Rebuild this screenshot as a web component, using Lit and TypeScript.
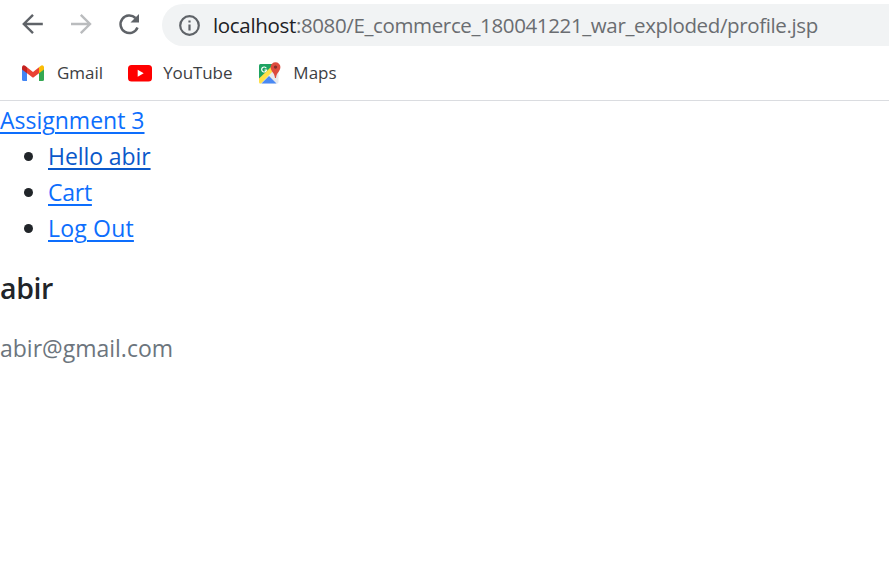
import { LitElement, html, css } from "lit";
import { customElement } from "lit/decorators.js";

@customElement("app-root")
export class AppRoot extends LitElement {
  static styles = css`
    :host { display: block; height: 583px; overflow: hidden; background: #fff; font-family: "Open Sans", "Noto Sans", sans-serif; }
    svg { display: block; flex: none; }
    .toolbar { display: flex; align-items: center; height: 50px; box-sizing: border-box; padding-left: 21px; }
    .nav { display: flex; gap: 24px; margin-right: 21px; margin-top: -2px; }
    .nav svg { width: 24px; height: 24px; }
    .omnibox { flex: 1; display: flex; align-items: center; height: 42px; background: #f1f3f4; border-radius: 21px 0 0 21px; padding-left: 16px; }
    .omnibox svg { width: 23px; height: 23px; margin-right: 12px; }
    .url { font-size: 20.5px; line-height: 42px; white-space: nowrap; color: #6a6d71; letter-spacing: -0.37px; }
    .host { color: #202124; letter-spacing: -0.33px; }
    .bookmarks { display: flex; align-items: center; height: 50px; border-bottom: 1px solid #dadce0; padding-left: 21px; gap: 25px; color: #3c4043; font-size: 17px; line-height: 24px; }
    .bookmark { display: flex; align-items: center; gap: 12px; margin-top: -4px; }
    .bookmark.tube { gap: 11px; letter-spacing: -0.1px; }
    .bookmark svg { width: 24px; height: 24px; }
    .page { font-size: 23px; line-height: 36px; color: #212529; padding-top: 1px; }
    a { color: #0d6efd; text-decoration: underline; text-decoration-thickness: 2px; text-underline-offset: 3px; }
    .current { color: #0a58ca; letter-spacing: -0.08px; }
    .cart { letter-spacing: -0.25px; }
    .logout { letter-spacing: 0.2px; }
    ul { margin: 0 0 24px; padding-left: 24px; list-style: none; }
    li { display: flex; align-items: center; }
    li::before { content: ""; width: 9px; height: 9px; margin-right: 15px; border-radius: 50%; background: #212529; }
    h3 { margin: 0 0 24px; font-size: 28.5px; font-weight: 600; line-height: 36px; letter-spacing: -0.4px; }
    p { margin: 0; color: #6c757d; }
  `;

  render() {
    return html`
      <div class="toolbar">
        <div class="nav">
          <svg viewBox="0 0 24 24" fill="none" stroke="#5f6368" stroke-width="2.4"><path d="M21.800 12H3.500M12 2.800L2.800 12L12 21.200"/></svg>
          <svg viewBox="0 0 24 24" fill="none" stroke="#babcbe" stroke-width="2.4"><path d="M2 12H20.500M11.800 2.800L21 12L11.800 21.200"/></svg>
          <svg viewBox="0 0 24 24"><path d="M20.500 15.500A8.800 8.800 0 1 1 18.500 6" fill="none" stroke="#5f6368" stroke-width="2.500"/><path d="M22 2V10.500H13.500Z" fill="#5f6368"/></svg>
        </div>
        <div class="omnibox">
          <svg viewBox="0 0 23 23"><circle cx="11.5" cy="11.5" r="9.3" fill="none" stroke="#5f6368" stroke-width="2.2"/><path d="M10.400 10.400h2.200v6h-2.200zM10.400 6.400h2.200v2.200h-2.200z" fill="#5f6368"/></svg>
          <span class="url"><span class="host">localhost</span>:8080/E_commerce_180041221_war_exploded/profile.jsp</span>
        </div>
      </div>
      <div class="bookmarks">
        <div class="bookmark">
          <svg viewBox="0 0 24 24"><path d="M1 6v12.500q0 1.500 1.500 1.500H6V10Z" fill="#4285f4"/><path d="M23 6v12.500q0 1.500-1.500 1.500H18V10Z" fill="#34a853"/><path d="M18 6.300l1.500-1.300Q21 3.800 22.300 4.700 23 5.200 23 6.500V8.500L18 12.300Z" fill="#fbbc04"/><path d="M6 6.300L12 11l6-4.700v6L12 16.800 6 12.300Z" fill="#ea4335"/><path d="M1 8.500V6.500Q1 4.500 2.500 4.300 3.500 4.200 4.500 5L6 6.300v6Z" fill="#c5221f"/></svg>
          <span>Gmail</span>
        </div>
        <div class="bookmark tube">
          <svg viewBox="0 0 24 24"><rect y="4" width="24" height="16.500" rx="3.500" fill="#f00"/><path d="M9.700 8.700v7l6-3.500Z" fill="#fff"/></svg>
          <span>YouTube</span>
        </div>
        <div class="bookmark">
          <svg viewBox="0 0 24 24"><rect x="2" y="3" width="19.500" height="19.500" rx="1.500" fill="#e8eaed"/><path d="M2 4.500Q2 3 3.500 3H20L2 20.500Z" fill="#1ea362"/><path d="M2 17.500L14 6l3 3L4 22.500H3.500Q2 22.500 2 21Z" fill="#ffe047"/><path d="M4.500 22.500L12 15l7.500 7.500Z" fill="#4a89f3"/><path d="M9.300 7.200A2.500 2.500 0 1 0 9.600 9H7.500" fill="none" stroke="#fff" stroke-width="1.200"/><path d="M18.500 1.200a4.900 4.900 0 0 0-4.900 4.900c0 4.500 4 5.500 4.400 11h1c.4-5.500 4.400-6.500 4.400-11a4.900 4.900 0 0 0-4.900-4.900Z" fill="#dd4b3e"/><circle cx="18.500" cy="6.100" r="1.700" fill="#822f2b"/></svg>
          <span>Maps</span>
        </div>
      </div>
      <div class="page">
        <a>Assignment 3</a>
        <ul>
          <li><a class="current">Hello abir</a></li>
          <li><a class="cart">Cart</a></li>
          <li><a class="logout">Log Out</a></li>
        </ul>
        <h3>abir</h3>
        <p>abir@gmail.com</p>
      </div>`;
  }
}
